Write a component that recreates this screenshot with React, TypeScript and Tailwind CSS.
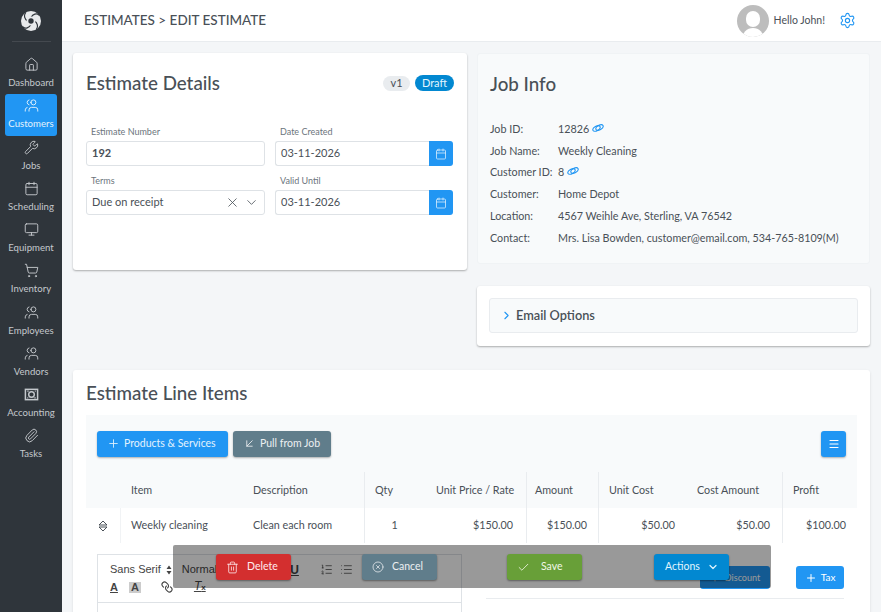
import {
  Home, Users, Wrench, Calendar, Monitor, ShoppingCart, Paperclip, Settings, ChevronRight,
  ChevronDown, X, Plus, ArrowDownLeft, Menu, Trash2, XCircle, Check, ListOrdered, List, Link,
} from "lucide-react";

function MoneyIcon({ size, className }: { size?: number; className?: string; strokeWidth?: number }) {
  return (
    <svg width={size} height={size} viewBox="0 0 16 16" fill="none" stroke="currentColor" className={className}>
      <rect x="1.5" y="2.5" width="13" height="11" strokeWidth="1.6" />
      <circle cx="8" cy="8" r="3" strokeWidth="1.5" />
      <path d="M3.5 4.5h1.5M11 11.5h1.500M3.500 11.500h1M11.500 4.500h1" strokeWidth="1.3" />
    </svg>
  );
}

function ChainIcon() {
  return (
    <svg width="12" height="10" viewBox="0 0 12 10" fill="none" stroke="#2196f3" strokeWidth="1.1" className="ml-[3px] -mt-[2px]">
      <ellipse cx="4.5" cy="5.5" rx="4" ry="2.2" transform="rotate(-30 4.5 5.5)" />
      <ellipse cx="7.5" cy="4.5" rx="4" ry="2.2" transform="rotate(-30 7.5 4.5)" />
    </svg>
  );
}

const navItems = [
  { label: "Dashboard", icon: Home },
  { label: "Customers", icon: Users, active: true, flip: true },
  { label: "Jobs", icon: Wrench },
  { label: "Scheduling", icon: Calendar },
  { label: "Equipment", icon: Monitor },
  { label: "Inventory", icon: ShoppingCart },
  { label: "Employees", icon: Users, flip: true },
  { label: "Vendors", icon: Users, flip: true },
  { label: "Accounting", icon: MoneyIcon },
  { label: "Tasks", icon: Paperclip },
];

const jobRows = [
  { label: "Job ID:", value: "12826", link: true },
  { label: "Job Name:", value: "Weekly Cleaning" },
  { label: "Customer ID:", value: "8", link: true },
  { label: "Customer:", value: "Home Depot" },
  { label: "Location:", value: "4567 Weihle Ave, Sterling, VA 76542" },
  { label: "Contact:", value: "Mrs. Lisa Bowden, customer@email.com, 534-765-8109(M)" },
];

function Logo() {
  return (
    <svg width="20" height="20" viewBox="0 0 20 20" fill="none">
      <circle cx="10" cy="10" r="10" fill="#e8eaec" />
      <path d="M10 6.5C12 3 15.5 2 18 4M13.5 10C16.5 12 17.500 15.500 15.500 18M10 13.500C8 17 4.500 18 2 16M6.500 10C3.500 8 2.500 4.500 4.500 2" stroke="#2f353b" strokeWidth="1.2" strokeLinecap="round" />
      <circle cx="10" cy="10" r="4.5" fill="#e8eaec" />
      <circle cx="10" cy="10" r="2.7" fill="#2f353b" />
    </svg>
  );
}

// up / down carets used by the drag handle and the editor's picker
function Carets({ outline }: { outline?: boolean }) {
  if (outline) {
    return (
      <svg width="10" height="12" viewBox="0 0 10 12" fill="none" stroke="#495057" strokeWidth="1">
        <path d="M5 1 9 5H1zM5 11 1 7h8z" strokeLinejoin="round" />
      </svg>
    );
  }
  return (
    <svg width="6" height="10" viewBox="0 0 6 10" fill="#444">
      <path d="M3 .5 5.500 4H.5zM3 9.500.5 6h5z" />
    </svg>
  );
}

function Sidebar() {
  return (
    <aside className="w-[62px] shrink-0 h-full bg-[#2f353b] flex flex-col items-center">
      <div className="h-[42px] w-full flex items-center justify-center relative">
        <Logo />
        <div className="absolute bottom-0 left-[12px] right-[11px] h-px bg-white/10" />
      </div>
      <nav className="w-full pt-[11px] flex flex-col items-center">
        {navItems.map((item) => {
          const Icon = item.icon;
          return (
            <div
              key={item.label}
              className={
                "w-[52px] h-[41.25px] pb-[1px] flex flex-col items-center justify-center rounded-[3px] " +
                (item.active ? "bg-[#2196f3] text-[#e3f2fd]" : "text-[#c4c8cc]")
              }
            >
              <Icon size={15} strokeWidth={1.5} className={item.flip ? "-scale-x-100 mb-[5px]" : "mb-[5px]"} />
              <span className="text-[9.6px] leading-[12px]">{item.label}</span>
            </div>
          );
        })}
      </nav>
    </aside>
  );
}

function Header() {
  return (
    <header className="h-[42px] shrink-0 bg-white border-b border-[#e9ecef] flex items-center justify-between pl-[22px] pr-[25px]">
      <div className="text-[13.5px] text-[#495057] font-medium">ESTIMATES &gt; EDIT ESTIMATE</div>
      <div className="flex items-center">
        <div className="w-[32px] h-[32px] rounded-full bg-[#bdbdbd] overflow-hidden relative">
          <div className="absolute left-[9px] top-[6px] w-[14px] h-[16px] rounded-full bg-white" />
          <div className="absolute left-[5px] top-[23px] w-[22px] h-[14px] rounded-t-full bg-white" />
        </div>
        <span className="ml-[5px] text-[10.5px] text-[#495057]">Hello John!</span>
        <Settings size={17} strokeWidth={1.6} className="ml-[14px] text-[#2196f3]" />
      </div>
    </header>
  );
}

function Field({ label, children }: { label: string; children: React.ReactNode }) {
  return (
    <div>
      <div className="text-[9px] leading-[11px] text-[#6c757d] pl-[5px] mb-[4px]">{label}</div>
      {children}
    </div>
  );
}

function DateInput({ value }: { value: string }) {
  return (
    <div className="flex h-[25px]">
      <div className="flex-1 border border-r-0 border-[#dee2e6] rounded-l-[3px] flex items-center pl-[5px] text-[11px] text-[#495057]">
        {value}
      </div>
      <div className="w-[24px] bg-[#2196f3] rounded-r-[3px] flex items-center justify-center text-[#e3f2fd]">
        <Calendar size={12} strokeWidth={1.5} />
      </div>
    </div>
  );
}

function EstimateDetails() {
  return (
    <section className="h-[217px] bg-white rounded-[3px] shadow-[0_1px_2px_rgba(0,0,0,0.3)] px-[13px]">
      <div className="flex items-center justify-between h-[60px]">
        <h2 className="text-[18.75px] text-[#495057] font-medium">Estimate Details</h2>
        <div className="flex items-center gap-[5px]">
          <span className="h-[15px] w-[27px] rounded-full bg-[#e9ecef] text-[11px] text-[#495057] flex items-center justify-center">v1</span>
          <span className="h-[16px] w-[39px] rounded-full bg-[#0288d1] text-[11px] text-[#e1f5fe] flex items-center justify-center">Draft</span>
        </div>
      </div>
      <div className="grid grid-cols-[179px_178px] gap-x-[10px] gap-y-[9px] pt-[13px]">
        <Field label="Estimate Number">
          <div className="h-[25px] border border-[#dee2e6] rounded-[3px] flex items-center pl-[5px] text-[11px] font-bold text-[#495057]">192</div>
        </Field>
        <Field label="Date Created">
          <DateInput value="03-11-2026" />
        </Field>
        <Field label="Terms">
          <div className="h-[25px] border border-[#dee2e6] rounded-[3px] flex items-center pl-[5px] pr-[5px] text-[11px] text-[#495057]">
            <span className="flex-1">Due on receipt</span>
            <X size={15} strokeWidth={1.3} className="mr-[4px]" />
            <ChevronDown size={15} strokeWidth={1.3} />
          </div>
        </Field>
        <Field label="Valid Until">
          <DateInput value="03-11-2026" />
        </Field>
      </div>
    </section>
  );
}

function JobInfo() {
  return (
    <section className="h-[211px] bg-[#f8fafb] border border-[#f0f3f5] rounded-[3px] px-[12px]">
      <h2 className="h-[64px] pt-[18px] text-[18.75px] leading-[24px] text-[#495057] font-medium">Job Info</h2>
      <div className="flex flex-col">
        {jobRows.map((row) => (
          <div key={row.label} className="flex h-[21.8px] items-center text-[10.75px] text-[#495057]">
            <span className="w-[68px] shrink-0">{row.label}</span>
            <span>{row.value}</span>
            {row.link && <ChainIcon />}
          </div>
        ))}
      </div>
    </section>
  );
}

function EmailOptions() {
  return (
    <section className="h-[60px] bg-white rounded-[3px] shadow-[0_1px_2px_rgba(0,0,0,0.3)] p-[12px]">
      <div className="h-[35px] bg-[#f8fafb] border border-[#e9ecef] rounded-[3px] flex items-center pl-[10px] text-[12.75px] font-semibold text-[#495057]">
        <ChevronRight size={13} strokeWidth={2} className="text-[#2196f3] mr-[3px]" />
        Email Options
      </div>
    </section>
  );
}

function LineItemsTable() {
  const headClass = "h-[36px] flex items-center text-[10.75px] text-[#495057] bg-[#f8fafb]";
  const cellClass = "h-[35px] flex items-center text-[10.75px] text-[#495057] bg-white";
  return (
    <div className="grid grid-cols-[35px_122px_121px_60px_102px_72px_88px_96px_75px]">
      <div className={headClass} />
      <div className={headClass + " pl-[10px]"}>Item</div>
      <div className={headClass + " pl-[10px]"}>Description</div>
      <div className={headClass + " pl-[10px] border-l border-[#e9ecef]"}>Qty</div>
      <div className={headClass + " pl-[12px]"}>Unit Price / Rate</div>
      <div className={headClass + " pl-[8px] border-l border-[#e9ecef]"}>Amount</div>
      <div className={headClass + " pl-[10px] border-l border-[#e9ecef]"}>Unit Cost</div>
      <div className={headClass + " pl-[11px]"}>Cost Amount</div>
      <div className={headClass + " pl-[10px] border-l border-[#e9ecef]"}>Profit</div>
      <div className={cellClass + " justify-center border-r border-[#f1f3f5]"}>
        <Carets outline />
      </div>
      <div className={cellClass + " pl-[10px]"}>Weekly cleaning</div>
      <div className={cellClass + " pl-[10px]"}>Clean each room</div>
      <div className={cellClass + " justify-center border-l border-[#e9ecef]"}>1</div>
      <div className={cellClass + " justify-end pr-[13px]"}>$150.00</div>
      <div className={cellClass + " justify-end pr-[11px] border-l border-[#e9ecef]"}>$150.00</div>
      <div className={cellClass + " justify-end pr-[11px] border-l border-[#e9ecef]"}>$50.00</div>
      <div className={cellClass + " justify-end pr-[12px]"}>$50.00</div>
      <div className={cellClass + " justify-end pr-[11px] border-l border-[#e9ecef]"}>$100.00</div>
    </div>
  );
}

function Editor() {
  return (
    <div className="w-[365px] border border-[#dee2e6] border-b-0 font-['Liberation_Sans',sans-serif]">
      <div className="h-[48px] border-b border-[#dee2e6] pl-[12px] pt-[7px] text-[#444]">
        <div className="flex items-center h-[15px] text-[11px]">
          <span>Sans Serif</span>
          <span className="ml-[5px]">
            <Carets />
          </span>
          <span className="ml-[10px]">Normal</span>
          <span className="ml-[73px] underline font-bold text-[12px]">U</span>
          <ListOrdered size={13} strokeWidth={1.4} className="ml-[21px]" />
          <List size={13} strokeWidth={1.4} className="ml-[7px]" />
        </div>
        <div className="flex items-center h-[18px] mt-[1px] text-[11px] font-bold">
          <span className="underline">A</span>
          <span className="ml-[11px] bg-[#ccc] px-[2px] leading-[11px]">A</span>
          <Link size={12} strokeWidth={2.2} className="ml-[20px] rotate-90" />
          <span className="ml-[21px] italic font-normal underline text-[12px] leading-[12px]">
            T<span className="text-[8px] not-italic font-bold">x</span>
          </span>
        </div>
      </div>
      <div className="h-[20px] bg-white" />
    </div>
  );
}

function LineItems() {
  return (
    <section className="bg-white rounded-[3px] px-[13px] shadow-sm">
      <h2 className="h-[45px] pt-[1px] flex items-center text-[18.75px] text-[#495057] font-medium">Estimate Line Items</h2>
      <div className="h-[57px] bg-[#f8fafb] flex items-center px-[11px] gap-[5px]">
        <button className="h-[26px] w-[131px] rounded-[3px] bg-[#2196f3] text-[#e3f2fd] text-[10.5px] flex items-center pl-[10px] shadow-[0_1px_2px_rgba(0,0,0,0.3)]">
          <Plus size={13} strokeWidth={1.6} className="mr-[4px]" />
          Products &amp; Services
        </button>
        <button className="h-[26px] w-[98px] rounded-[3px] bg-[#607d8b] text-[#eceff1] text-[10.5px] flex items-center pl-[10px] shadow-[0_1px_2px_rgba(0,0,0,0.3)]">
          <ArrowDownLeft size={13} strokeWidth={1.6} className="mr-[4px]" />
          Pull from Job
        </button>
        <button className="ml-auto h-[26px] w-[25px] rounded-[3px] bg-[#2196f3] text-white flex items-center justify-center shadow-[0_1px_2px_rgba(0,0,0,0.3)]">
          <Menu size={12} strokeWidth={2.2} />
        </button>
      </div>
      <LineItemsTable />
      <div className="flex pt-[11px] pl-[11px]">
        <Editor />
        <div className="ml-[24px] flex-1 mr-[13px] border-b border-[#e9ecef] h-[45px] flex justify-end items-start pt-[12px]">
          <button className="h-[23px] w-[70px] rounded-[3px] bg-[#2196f3] text-white text-[9px] flex items-center justify-center">
            <Plus size={10} className="mr-[5px]" />
            Discount
          </button>
          <button className="ml-[26px] h-[23px] w-[48px] rounded-[3px] bg-[#2196f3] text-white text-[10px] flex items-center justify-center">
            <Plus size={12} className="mr-[4px]" />
            Tax
          </button>
        </div>
      </div>
    </section>
  );
}

function ActionBar() {
  const btn = "absolute top-[9px] h-[26px] w-[75px] rounded-[3px] text-[10.5px] flex items-center shadow-[0_1px_2px_rgba(0,0,0,0.4)]";
  return (
    <div className="absolute left-[173px] top-[545px] w-[598px] h-[43px] bg-black/40 rounded-[2px]">
      <button className={btn + " left-[43px] bg-[#d32f2f] text-[#ffebee] pl-[10px]"}>
        <Trash2 size={13} strokeWidth={1.5} className="mr-[8px]" />
        Delete
      </button>
      <button className={btn + " left-[189px] bg-[#607d8b] text-[#eceff1] pl-[10px]"}>
        <XCircle size={12} strokeWidth={1.5} className="mr-[8px]" />
        Cancel
      </button>
      <button className={btn + " left-[334px] bg-[#689f38] text-[#f1f8e9] pl-[10px]"}>
        <Check size={13} strokeWidth={1.5} className="mr-[11px]" />
        Save
      </button>
      <button className={btn + " left-[481px] bg-[#0288d1] text-[#e1f5fe] pl-[11px]"}>
        Actions
        <ChevronDown size={12} strokeWidth={2.4} className="ml-[7px]" />
      </button>
    </div>
  );
}

export default function App() {
  return (
    <div className="relative w-[881px] h-[612px] overflow-hidden flex bg-[#f4f6f8] font-['Lato',sans-serif]">
      <Sidebar />
      <div className="flex-1 h-full flex flex-col min-w-0">
        <Header />
        <main className="pt-[11px] pl-[11px] pr-[11px] flex flex-col gap-[24px]">
          <div className="grid grid-cols-[394px_393px] gap-x-[10px]">
            <EstimateDetails />
            <div className="flex flex-col gap-[22px]">
              <JobInfo />
              <EmailOptions />
            </div>
          </div>
          <LineItems />
        </main>
      </div>
      <ActionBar />
    </div>
  );
}
